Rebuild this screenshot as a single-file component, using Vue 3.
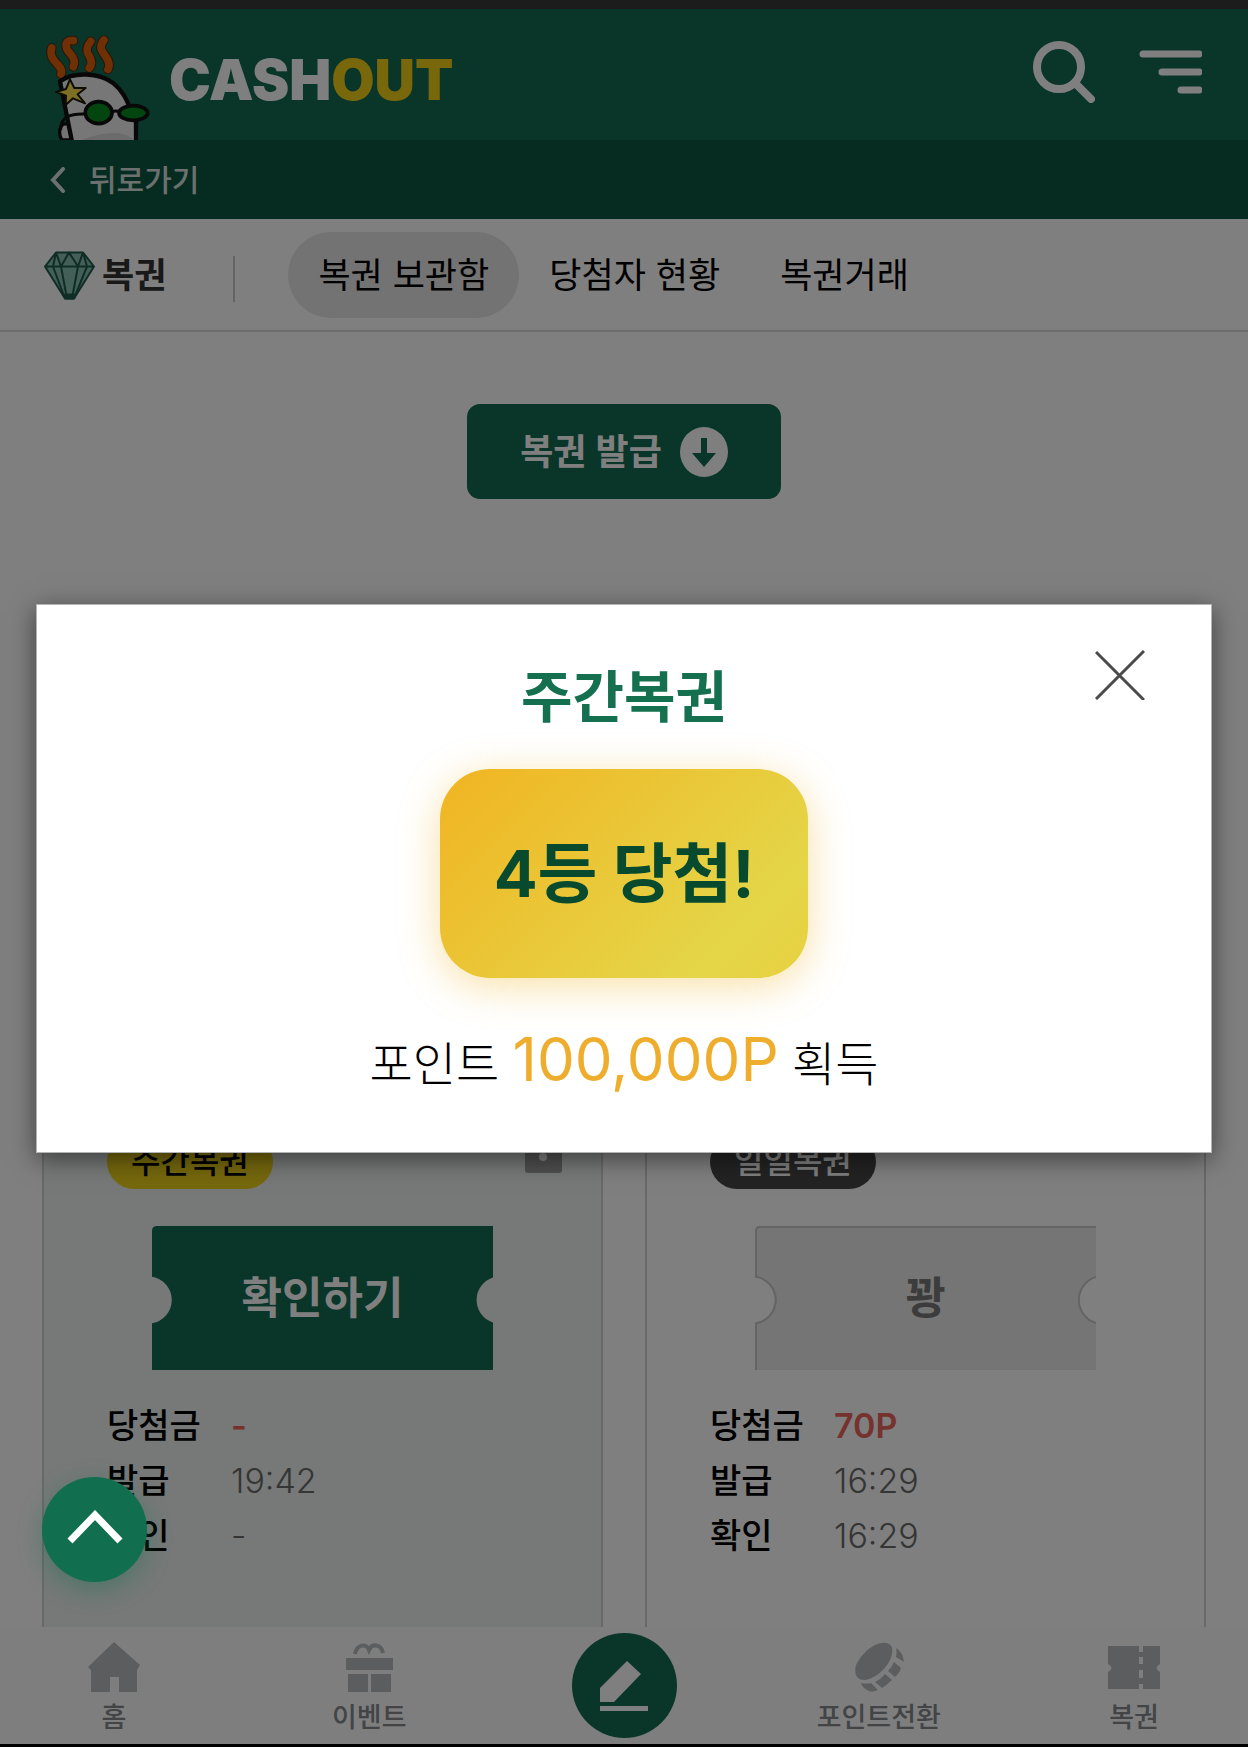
<template>
  <div class="app">
    <div class="status-strip"></div>

    <!-- Header -->
    <header class="header">
      <a class="logo" href="#">
        <svg class="logo-mascot" viewBox="138 105 315 315" aria-hidden="true">
          <g fill="none" stroke-linecap="round" stroke-linejoin="round">
            <g stroke="#4a2c10" stroke-width="29">
              <path v-for="d in flames" :key="d" :d="d" />
            </g>
            <g stroke="#e0600c" stroke-width="23">
              <path v-for="d in flames" :key="d" :d="d" />
            </g>
          </g>
          <path d="M190 372c-14 10-14 34-4 48h34l-8-50z" fill="#e8e8e8" stroke="#111" stroke-width="10" />
          <path d="M216 425L180 246c40-34 120-28 160 4 34 28 44 62 54 96l16 30v49z" fill="#eeeeee" />
          <path d="M216 425L180 244c40-30 118-26 158 4 32 26 42 52 52 76M408 362v60" fill="none" stroke="#111" stroke-width="13" />
          <path d="M232 425c40-16 120-44 164-10v10z" fill="#c8c8c8" opacity="0.6" />
          <path d="M182 390c-2-40 30-50 74-48M336 336c8-5 16-4 24 0" fill="none" stroke="#111" stroke-width="9" />
          <ellipse cx="296" cy="338" rx="40" ry="33" fill="#078a1f" stroke="#111" stroke-width="11" />
          <ellipse cx="400" cy="339" rx="43" ry="22" fill="#078a1f" stroke="#111" stroke-width="11" />
          <path d="M210 238l13 26 34 0-24 19 22 27-36-15-22 20 1-28-30-11 30-9z" fill="#fbe04a" stroke="#1d1a08" stroke-width="6" stroke-linejoin="round" />
        </svg>
        <span class="logo-text">CASH<span class="logo-text--accent">OUT</span></span>
      </a>
      <div class="header-actions">
        <button class="icon-button" type="button" aria-label="검색">
          <svg width="62" height="62" viewBox="0 0 62 62" fill="none" stroke="#fff" stroke-linecap="round">
            <circle cx="26" cy="26" r="22" stroke-width="8" />
            <path d="M43 43l15 15" stroke-width="8" />
          </svg>
        </button>
        <button class="icon-button" type="button" aria-label="메뉴">
          <svg width="63" height="62" viewBox="0 0 63 62" fill="none" stroke="#fff" stroke-width="7" stroke-linecap="round">
            <path d="M4 13h56M23 31h37M42 49h18" />
          </svg>
        </button>
      </div>
    </header>

    <!-- Back bar -->
    <div class="back-bar">
      <a class="back-link" href="#">
        <svg width="16" height="26" viewBox="0 0 16 26" fill="none" stroke="currentColor" stroke-width="4" stroke-linecap="round">
          <path d="M13 2L3 13l10 11" />
        </svg>
        뒤로가기
      </a>
    </div>

    <!-- Tabs -->
    <nav class="tab-bar">
      <h1 class="tab-title">
        <svg width="51" height="52" viewBox="0 -1 51 51" stroke="#1f5a4a" stroke-width="2" stroke-linejoin="round" aria-hidden="true">
          <path d="M12 2h27l11 14-20 32h-9L1 16z" fill="#86bfae" />
          <path d="M1 16h49M12 2l5 14 6 32M39 2l-5 14-6 32M12 2L9 16l12 32M39 2l4 14-13 32M17 16l8-14 9 14" fill="none" />
          <path d="M21 44h9v4h-9z" fill="#1f5a4a" />
        </svg>
        복권
      </h1>
      <span class="tab-divider"></span>
      <div class="tabs">
        <a
          v-for="tab in tabs"
          :key="tab"
          class="tab"
          :class="{ 'tab--active': tab === activeTab }"
          href="#"
          @click.prevent="activeTab = tab"
        >{{ tab }}</a>
      </div>
    </nav>

    <!-- Content -->
    <main class="content">
      <button class="issue-button" type="button">
        복권 발급
        <svg width="48" height="50" viewBox="0 0 48 50" aria-hidden="true">
          <ellipse cx="24" cy="25" rx="24" ry="25" fill="#fff" />
          <path d="M24 11v22" stroke="#146c52" stroke-width="6" />
          <path d="M12 26h24L24 40z" fill="#146c52" />
        </svg>
      </button>

      <div class="ticket-grid">
        <article v-for="item in tickets" :key="item.type" class="card" :class="'card--' + item.state">
          <div class="card-header">
            <span class="chip">{{ item.type }}</span>
            <svg v-if="item.state === 'open'" class="lock" width="37" height="50" viewBox="0 0 37 50" aria-hidden="true">
              <path d="M8 20v-7a10 10 0 0 1 21 0v7" fill="none" stroke="#9e9e9e" stroke-width="5" />
              <rect y="18" width="37" height="32" rx="3" fill="#9e9e9e" />
              <circle cx="18" cy="34" r="4" fill="#fff" />
            </svg>
          </div>

          <button class="ticket" type="button">
            <svg class="ticket-shape" viewBox="0 0 341 144" aria-hidden="true">
              <path
                class="ticket-fill"
                d="M0 5Q0 0 5 0H341V51.6A23.5 23.5 0 0 0 341 96.4V144H0V97.2A23.5 23.5 0 0 0 0 50.8Z"
              />
              <path
                class="ticket-line"
                d="M1 144V97.2A23.5 23.5 0 0 0 1 50.8V5Q1 1 5 1H341M341 51A24 24 0 0 0 341 97"
              />
            </svg>
            <span class="ticket-label">{{ item.label }}</span>
          </button>

          <dl class="info">
            <div class="info-row">
              <dt>당첨금</dt>
              <dd class="info-prize">{{ item.prize }}</dd>
            </div>
            <div class="info-row">
              <dt>발급</dt>
              <dd>{{ item.issued }}</dd>
            </div>
            <div class="info-row">
              <dt>확인</dt>
              <dd>{{ item.checked }}</dd>
            </div>
          </dl>
        </article>
      </div>
    </main>

    <!-- Bottom navigation -->
    <nav class="bottom-nav">
      <a class="nav-item" href="#">
        <svg width="52" height="50" viewBox="0 0 52 50" fill="currentColor" aria-hidden="true">
          <path d="M26 0l26 23-3 5v22H31V35h-9v15H3V28l-3-3z" />
        </svg>
        홈
      </a>
      <a class="nav-item" href="#">
        <svg width="52" height="50" viewBox="0 0 52 50" fill="currentColor" aria-hidden="true">
          <path d="M12 12C14 2 23 1 26 8c3-7 12-6 14 3" fill="none" stroke="currentColor" stroke-width="4" />
          <path d="M3 16h47v12H3zM5 32h20v18H5zM28 32h20v18H28z" />
        </svg>
        이벤트
      </a>
      <button class="nav-write" type="button" aria-label="글쓰기">
        <svg width="48" height="50" viewBox="0 0 48 50" fill="#fff" aria-hidden="true">
          <path d="M27 0l14 13-27 28H0V27zM0 45h48v5H0z" />
        </svg>
      </button>
      <a class="nav-item" href="#">
        <svg width="52" height="50" viewBox="0 0 52 50" fill="currentColor" aria-hidden="true">
          <path d="M22 3C33-2 41 1 39 12 37 23 24 37 11 38 1 38 1 27 4 21 8 14 14 7 22 3z" />
          <path d="M43 6q7 4 8 14l-8-5q1-5 0-9zM41 20l7 6q-2 6-6 9l-7-6q4-4 6-9zM32 32l7 6q-5 5-10 8l-7-6q6-3 10-8zM18 41l7 7q-7 3-11 0-5-3-6-7 5 1 10 0z" />
        </svg>
        포인트전환
      </a>
      <a class="nav-item" href="#">
        <svg width="52" height="50" viewBox="0 0 52 50" fill="currentColor" aria-hidden="true">
          <path d="M0 4h31v6h4V4h17v18q-7 4 0 8v17H35v-5h-4v5H0V30q7-4 0-8zM31 15v7h4v-7zM31 28v8h4v-8z" fill-rule="evenodd" />
        </svg>
        복권
      </a>
    </nav>

    <!-- Winning dialog -->
    <div v-if="dialogOpen" class="overlay">
      <section class="dialog" role="dialog" aria-modal="true" aria-labelledby="dialog-title">
        <button class="dialog-close" type="button" aria-label="닫기" @click="dialogOpen = false">
          <svg width="50" height="50" viewBox="0 0 50 50" fill="none" stroke="#4a4a4a" stroke-width="3">
            <path d="M1 2l48 48M1 49L49 1" />
          </svg>
        </button>
        <h2 id="dialog-title" class="dialog-title">주간복권</h2>
        <div class="dialog-badge">4등 당첨!</div>
        <p class="dialog-points">포인트 <strong>100,000P</strong> 획득</p>
      </section>
    </div>

    <button class="scroll-top" type="button" aria-label="맨 위로">
      <svg width="56" height="40" viewBox="0 0 56 40" fill="none" stroke="#fff" stroke-width="7">
        <path d="M3 31L28 5l25 26" />
      </svg>
    </button>
  </div>
</template>

<script setup>
import { ref } from 'vue'

const tabs = ['복권 보관함', '당첨자 현황', '복권거래']
const activeTab = ref('복권 보관함')
const dialogOpen = ref(true)

const tickets = [
  { type: '주간복권', state: 'open', label: '확인하기', prize: '-', issued: '19:42', checked: '-' },
  { type: '일일복권', state: 'lost', label: '꽝', prize: '70P', issued: '16:29', checked: '16:29' }
]

// Hair of the mascot, drawn twice: dark outline below, orange on top
const flames = [
  'M155 144c-8 28 10 40 22 54 8 10 10 16 6 24',
  'M220 122c-28-4-26 22-10 38 14 16 16 28 10 40',
  'M272 124c-14 18-14 30-4 44 8 14 8 26 0 36',
  'M312 120c-16 20-8 32 4 48 12 16 14 28 8 40'
]
</script>

<style>
body {
  margin: 0;
}
</style>

<style scoped>
.app {
  position: relative;
  display: flex;
  flex-direction: column;
  height: 100vh;
  overflow: hidden;
  background: #fff;
  color: #000;
  font-family: Inter, 'Noto Sans CJK KR', sans-serif;
}

.app a {
  text-decoration: none;
}

.app button {
  border: 0;
  padding: 0;
  font-family: inherit;
  cursor: pointer;
}

.app svg {
  display: block;
  flex-shrink: 0;
}

.status-strip {
  flex-shrink: 0;
  height: 9px;
  background: #1c1c1c;
}

/* Header */
.header {
  flex-shrink: 0;
  display: flex;
  justify-content: space-between;
  align-items: flex-end;
  height: 131px;
  padding: 0 46px;
  background: #146c52;
}

.logo {
  display: flex;
  align-items: flex-end;
  gap: 18px;
}

.logo-mascot {
  width: 105px;
  height: 105px;
}

.logo-text {
  padding-bottom: 28px;
  font-size: 56px;
  font-weight: 900;
  line-height: 64px;
  color: #fff;
}

.logo-text--accent {
  color: #f2cf18;
}

.header-actions {
  display: flex;
  gap: 44px;
  align-self: center;
  padding-bottom: 6px;
}

.icon-button {
  background: none;
}

/* Back bar */
.back-bar {
  flex-shrink: 0;
  display: flex;
  align-items: center;
  height: 79px;
  padding: 0 50px;
  background: #0c5741;
}

.back-link {
  display: flex;
  align-items: center;
  gap: 23px;
  font-size: 30px;
  font-weight: 500;
  line-height: 44px;
  color: #d8e2de;
}

/* Tabs */
.tab-bar {
  flex-shrink: 0;
  display: flex;
  align-items: center;
  height: 111px;
  padding: 0 44px;
  border-bottom: 2px solid #dadada;
}

.tab-title {
  display: flex;
  align-items: center;
  gap: 7px;
  margin: 0;
  font-size: 35px;
  font-weight: 700;
  line-height: 50px;
  color: #333;
}

.tab-divider {
  width: 2px;
  height: 46px;
  margin: 8px 53px 0 67px;
  background: #c8c8c8;
}

.tabs {
  display: flex;
}

.tab {
  padding: 18px 30px;
  border-radius: 43px;
  font-size: 35px;
  line-height: 50px;
  white-space: nowrap;
  color: #000;
}

.tab--active {
  background: #e6e6e6;
}

/* Content */
.content {
  flex: 1;
  min-height: 0;
  display: flex;
  flex-direction: column;
  align-items: center;
  padding: 72px 42px 0;
  overflow: hidden;
}

.issue-button {
  flex-shrink: 0;
  display: flex;
  align-items: center;
  justify-content: center;
  gap: 18px;
  width: 314px;
  height: 95px;
  border-radius: 13px;
  background: #146c52;
  color: #fff;
  font-size: 36px;
  font-weight: 600;
  line-height: 52px;
}

.ticket-grid {
  flex-shrink: 0;
  display: grid;
  grid-template-columns: 1fr 1fr;
  gap: 42px;
  width: 100%;
  margin-top: 599px;
}

.card {
  display: flex;
  flex-direction: column;
  padding: 35px 39px 96px 63px;
  border: 2px solid #d2d2d2;
}

.card--open {
  background: #ecf2f0;
}

.card-header {
  display: flex;
  justify-content: space-between;
  height: 54px;
}

.chip {
  padding: 0 24px;
  border-radius: 27px;
  font-size: 32px;
  font-weight: 500;
  line-height: 54px;
}

.card--open .chip {
  background: #ecd01a;
}

.card--lost .chip {
  background: #464646;
  color: #fff;
}

.lock {
  align-self: flex-start;
  margin-top: -12px;
}

.ticket {
  position: relative;
  width: 341px;
  height: 144px;
  margin: 37px 0 28px 45px;
  background: none;
}

.ticket-shape {
  position: absolute;
  inset: 0;
}

.ticket-label {
  position: relative;
  font-size: 44px;
  font-weight: 600;
  line-height: 64px;
}

.card--open .ticket-label {
  color: #fff;
}

.card--lost .ticket-label {
  color: #787878;
}

.card--open .ticket-fill {
  fill: #146c52;
}

.card--lost .ticket-fill {
  fill: #eaeaea;
}

.ticket-line {
  fill: none;
  stroke: none;
}

.card--lost .ticket-line {
  stroke: #c8c8c8;
  stroke-width: 2;
}

.info {
  margin: 0;
}

.info-row {
  display: flex;
  align-items: center;
  font-size: 34px;
  line-height: 55px;
}

.info dt {
  width: 124px;
  font-weight: 500;
}

.info dd {
  margin: 0;
  font-weight: 300;
  color: #6a6a6a;
}

.info .info-prize {
  font-weight: 600;
  color: #ec665c;
}

/* Bottom navigation */
.bottom-nav {
  flex-shrink: 0;
  display: flex;
  justify-content: space-between;
  align-items: center;
  height: 117px;
  padding: 0 42px;
  border-bottom: 3px solid #000;
  background: #fcfcfc;
}

.nav-item {
  display: flex;
  flex-direction: column;
  align-items: center;
  gap: 6px;
  width: 144px;
  padding-top: 8px;
  font-size: 27px;
  font-weight: 500;
  line-height: 40px;
  white-space: nowrap;
  color: #85888c;
}

.nav-item svg {
  color: #b8bbbe;
}

.nav-write {
  display: flex;
  align-items: center;
  justify-content: center;
  width: 105px;
  height: 105px;
  margin: 0 19px;
  border-radius: 50%;
  background: #146c52;
}

/* Dialog */
.overlay {
  position: absolute;
  inset: 9px 0 0;
  display: flex;
  align-items: center;
  padding: 0 36px;
  background: rgba(0, 0, 0, 0.5);
}

.dialog {
  position: relative;
  flex: 1;
  display: flex;
  flex-direction: column;
  align-items: center;
  padding: 52px 0 43px;
  border: 1px solid #b4b4b4;
  background: #fff;
  box-shadow: 0 6px 24px rgba(0, 0, 0, 0.5);
}

.dialog-close {
  position: absolute;
  top: 45px;
  right: 66px;
  background: none;
}

.dialog-title {
  margin: 0;
  font-size: 56px;
  font-weight: 700;
  line-height: 80px;
  color: #14704f;
}

.dialog-badge {
  margin-top: 32px;
  padding: 0 54px;
  border-radius: 50px;
  background: linear-gradient(135deg, #f1b422, #e4d648 80%, #e8d040);
  box-shadow: 0 8px 40px rgba(241, 180, 34, 0.4);
  font-size: 65px;
  font-weight: 700;
  line-height: 209px;
  color: #074a2e;
}

.dialog-points {
  margin: 36px 0 0;
  font-size: 47px;
  font-weight: 300;
  line-height: 90px;
}

.dialog-points strong {
  font-size: 60px;
  font-weight: 400;
  color: #efad2d;
}

.scroll-top {
  position: absolute;
  left: 42px;
  bottom: 165px;
  display: flex;
  align-items: center;
  justify-content: center;
  width: 105px;
  height: 105px;
  border-radius: 50%;
  background: #116e4e;
  box-shadow: 0 8px 24px rgba(17, 110, 78, 0.4);
}
</style>
